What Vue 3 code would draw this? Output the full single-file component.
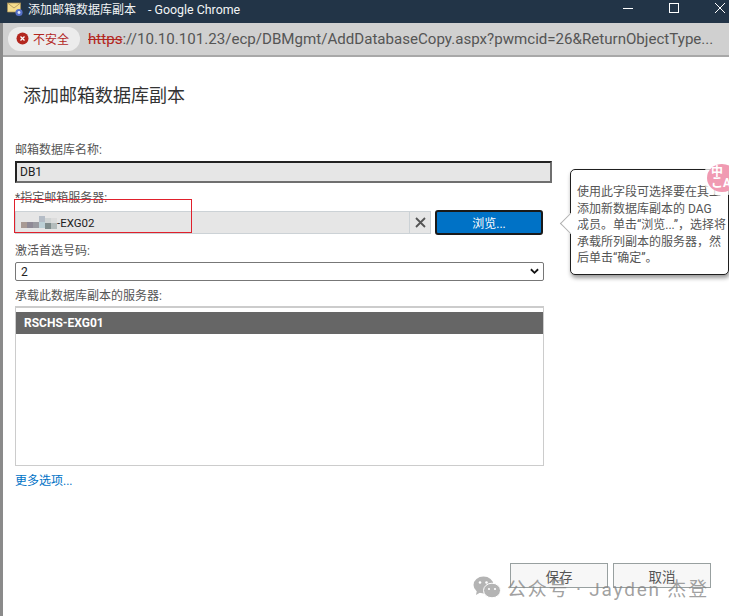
<script setup>
const blurCells = [
  { x: 0, y: 6, c: '#a89a94' }, { x: 6, y: 6, c: '#8f8a96' }, { x: 12, y: 6, c: '#9a9aa0' },
  { x: 18, y: 0, c: '#b4bcc6' }, { x: 18, y: 6, c: '#bcd0d6' }, { x: 24, y: 2, c: '#d0d4d4' },
  { x: 24, y: 7, c: '#7f8c8c' }, { x: 30, y: 2, c: '#dcdcdc' }, { x: 30, y: 7, c: '#b4bcbc' }
]
const tipLines = [
  '使用此字段可选择要在其上',
  '添加新数据库副本的 DAG',
  '成员。单击“浏览...”，选择将',
  '承载所列副本的服务器，然',
  '后单击“确定”。'
]
</script>

<template>
  <div class="shot">
    <header class="titlebar">
      <svg class="appicon" width="17" height="16" viewBox="0 0 16 16">
        <path d="M0 1h13v9H0z" fill="#f4dc8c" stroke="#a8905a" stroke-width=".7" />
        <path d="M0 1l6.5 5L13 1" fill="none" stroke="#a8905a" stroke-width=".8" />
        <circle cx="11.5" cy="10.5" r="3.6" fill="#5570c8" />
        <circle cx="11.5" cy="10.5" r="1.4" fill="#dfe6f8" />
      </svg>
      <span class="wintitle"><span class="cjk12">添加邮箱数据库副本</span><span class="apptitle">- Google Chrome</span></span>
      <div class="winctl">
        <svg width="12" height="12" viewBox="0 0 12 12"><path d="M1 6.5h10" stroke="#fff" /></svg>
        <svg width="12" height="12" viewBox="0 0 12 12"><rect x="1.5" y="1.5" width="9" height="9" fill="none" stroke="#fff" /></svg>
        <svg width="12" height="12" viewBox="0 0 12 12"><path d="M1 1l10 10M11 1L1 11" stroke="#fff" /></svg>
      </div>
    </header>

    <div class="addrbar">
      <div class="chip">
        <svg width="13" height="13" viewBox="0 0 13 13">
          <circle cx="6.5" cy="6.5" r="6" fill="#b3261e" />
          <path d="M4.5 4.5l4 4M8.5 4.5l-4 4" stroke="#fff" stroke-width="1.3" />
        </svg>
        <span>不安全</span>
      </div>
      <div class="url"><s>https</s><span>://10.10.101.23/ecp/DBMgmt/AddDatabaseCopy.aspx?pwmcid=26&amp;ReturnObjectType...</span></div>
    </div>

    <main class="page">
      <h1>添加邮箱数据库副本</h1>

      <label class="lbl first">邮箱数据库名称:</label>
      <div class="readonly">DB1</div>

      <label class="lbl second">*指定邮箱服务器:</label>
      <div class="picker">
        <div class="pickfield">
          <span class="blur">
            <i v-for="(b, i) in blurCells" :key="i" :style="{ left: b.x + 'px', top: b.y + 'px', background: b.c }"></i>
          </span>
          <span class="server">-EXG02</span>
          <span class="clear">
            <svg width="11" height="11" viewBox="0 0 11 11"><path d="M1 1l9 9M10 1l-9 9" stroke="#555" stroke-width="1.8" /></svg>
          </span>
        </div>
        <button class="browse" type="button">浏览...</button>
      </div>

      <label class="lbl third">激活首选号码:</label>
      <div class="select">
        <span>2</span>
        <svg width="9" height="7" viewBox="0 0 10 7"><path d="M1 1l4 4 4-4" fill="none" stroke="#111" stroke-width="2" /></svg>
      </div>

      <label class="lbl fourth">承载此数据库副本的服务器:</label>
      <div class="list">
        <div class="row">RSCHS-EXG01</div>
      </div>

      <a class="more">更多选项...</a>

      <div class="actions">
        <button type="button">保存</button>
        <button type="button">取消</button>
      </div>

      <div class="redbox"></div>

      <aside class="tip">
        <span class="arrow"></span>
        <div v-for="line in tipLines" :key="line" class="tipline">{{ line }}</div>
      </aside>
      <div class="badge"><span>中<br>こA</span></div>

      <div class="mark">
        <svg width="28" height="23" viewBox="0 0 28 23">
          <ellipse cx="10.5" cy="9" rx="10" ry="8.5" fill="#b4b4b4" />
          <path d="M4 14l-1 5 5-3z" fill="#b4b4b4" />
          <ellipse cx="19" cy="14.5" rx="8.5" ry="7.3" fill="#b4b4b4" stroke="#fff" />
          <circle cx="7" cy="6.5" r="1.3" fill="#fff" /><circle cx="13.5" cy="6.5" r="1.3" fill="#fff" />
          <circle cx="16" cy="13" r="1.1" fill="#fff" /><circle cx="22" cy="13" r="1.1" fill="#fff" />
        </svg>
        <span>公众号 · Jayden 杰登</span>
      </div>
    </main>
  </div>
</template>

<style scoped>
.shot {
  position: relative;
  width: 729px;
  height: 616px;
  overflow: hidden;
  background: #fff;
  font-family: Roboto, "Noto Sans CJK SC", sans-serif;
  color: #333;
}
.titlebar {
  height: 23px;
  background: #223447;
  display: flex;
  align-items: center;
  padding-left: 7px;
  color: #f2f4f6;
  font-size: 13px;
}
.cjk12 { font-size: 12px; }
.apptitle { margin-left: 12px; font-size: 12.4px; }
.appicon { margin-right: 4px; margin-top: -3px; }
.wintitle { white-space: nowrap; margin-top: -6px; }
.winctl {
  margin-left: auto;
  display: flex;
  gap: 34px;
  padding-right: 3px;
  margin-top: -7px;
}
.addrbar {
  height: 34px;
  box-sizing: border-box;
  margin-left: 3px;
  background: #d0d0d0;
  border-bottom: 2px solid #a8a8a8;
  display: flex;
  align-items: center;
  padding-left: 5px;
  position: relative;
}
.addrbar::before {
  content: "";
  position: absolute;
  left: -3px;
  top: 0;
  bottom: -2px;
  width: 3px;
  background: #8a8a8a;
}
.chip {
  width: 72px;
  height: 24px;
  box-sizing: border-box;
  border-radius: 12px;
  background: #ececec;
  display: flex;
  align-items: center;
  gap: 4px;
  padding-left: 8px;
  color: #b3261e;
  font-size: 12px;
  margin-top: -1px;
  flex: none;
}
.url {
  margin-left: 8px;
  font-size: 15.1px;
  color: #555;
  white-space: nowrap;
  margin-top: -1px;
}
.url s { color: #b3261e; }
.page {
  height: 559px;
  box-sizing: border-box;
  border-left: 3px solid #8a8a8a;
  padding-left: 12px;
  display: flex;
  flex-direction: column;
  align-items: flex-start;
}
h1 {
  margin: 27px 0 0 8px;
  font-size: 18px;
  line-height: 24px;
  font-weight: 400;
  color: #333;
}
.lbl {
  display: block;
  font-size: 12px;
  line-height: 14px;
  color: #555;
  white-space: nowrap;
}
.first { margin-top: 35px; }
.second { margin-top: 8px; }
.third { margin-top: 9px; }
.fourth { margin-top: 8px; }
.readonly {
  width: 537px;
  height: 22px;
  box-sizing: border-box;
  margin-top: 4px;
  background: #e6e6e6;
  border: 2px solid;
  border-color: #222 #6f6f6f #6f6f6f #222;
  font-size: 12px;
  line-height: 18px;
  padding-left: 3px;
  color: #222;
}
.picker {
  display: flex;
  align-items: center;
  width: 528px;
  height: 25px;
  margin-top: 5px;
  justify-content: space-between;
}
.pickfield {
  position: relative;
  width: 416px;
  height: 23px;
  box-sizing: border-box;
  background: #e6e6e6;
  border: 1px solid #ccd2d6;
  display: flex;
  align-items: center;
  padding-left: 41px;
  font-size: 11.5px;
  color: #222;
}
.server { padding-top: 1px; }
.blur {
  position: absolute;
  left: 5px;
  top: 4px;
  width: 36px;
  height: 14px;
}
.blur i {
  position: absolute;
  width: 6px;
  height: 6px;
}
.clear {
  position: absolute;
  right: 0;
  top: 0;
  bottom: 0;
  width: 20px;
  border-left: 1px solid #ccd2d6;
  display: flex;
  align-items: center;
  justify-content: center;
}
.browse {
  width: 108px;
  height: 25px;
  box-sizing: border-box;
  padding: 0;
  background: #0072c6;
  border: 2px solid #1a1a1a;
  border-radius: 3px;
  color: #fff;
  font: inherit;
  font-size: 12px;
}
.select {
  width: 529px;
  height: 19px;
  box-sizing: border-box;
  margin-top: 4px;
  border: 1px solid #777;
  border-radius: 2px;
  display: flex;
  align-items: center;
  justify-content: space-between;
  padding: 0 4px 0 5px;
  font-size: 12px;
  color: #222;
}
.list {
  width: 529px;
  height: 160px;
  box-sizing: border-box;
  margin-top: 3px;
  border: 1px solid #ccc;
  border-top-width: 2px;
  padding-top: 4px;
}
.row {
  height: 22px;
  background: #666;
  color: #fff;
  font-size: 12px;
  font-weight: 700;
  line-height: 22px;
  padding-left: 8px;
}
.more {
  margin-top: 8px;
  font-size: 12px;
  line-height: 14px;
  color: #0072c6;
}
.actions {
  display: flex;
  gap: 5px;
  margin: 75px 0 0 495px;
}
.actions button {
  width: 98px;
  height: 25px;
  box-sizing: border-box;
  padding: 0;
  background: #f7f7f7;
  border: 1px solid #98a0a0;
  color: #555;
  font: inherit;
  font-size: 13.5px;
}
.redbox {
  position: absolute;
  left: 14px;
  top: 199px;
  width: 178px;
  height: 34px;
  box-sizing: border-box;
  border: 1px solid #e0202c;
}
.tip {
  position: absolute;
  left: 570px;
  top: 169px;
  width: 159px;
  height: 106px;
  box-sizing: border-box;
  background: #fff;
  border: 1px solid #1f1f1f;
  border-radius: 5px;
  box-shadow: 1px 3px 4px rgba(0, 0, 0, .4);
  padding: 14px 0 0 6px;
  font-size: 12px;
  line-height: 16.5px;
  color: #555;
}
.tipline { white-space: nowrap; }
.arrow {
  position: absolute;
  left: -8px;
  top: 46px;
  width: 14px;
  height: 14px;
  background: #fff;
  border-left: 1px solid #b0b0b0;
  border-bottom: 1px solid #b0b0b0;
  transform: rotate(45deg);
}
.badge {
  position: absolute;
  left: 707px;
  top: 164px;
  width: 30px;
  height: 28px;
  border-radius: 50%;
  background: #f09ab2;
  box-shadow: 0 0 0 4px rgba(255, 255, 255, .75);
  color: #fff;
  font-size: 12px;
  font-weight: 700;
  line-height: 11px;
  text-align: left;
  padding: 3px 0 0 4px;
  box-sizing: border-box;
}
.mark {
  position: absolute;
  left: 473px;
  top: 574px;
  display: flex;
  align-items: center;
  gap: 6px;
  color: rgba(130, 130, 130, .75);
  font-size: 19px;
  letter-spacing: 1.8px;
  white-space: nowrap;
}
</style>
